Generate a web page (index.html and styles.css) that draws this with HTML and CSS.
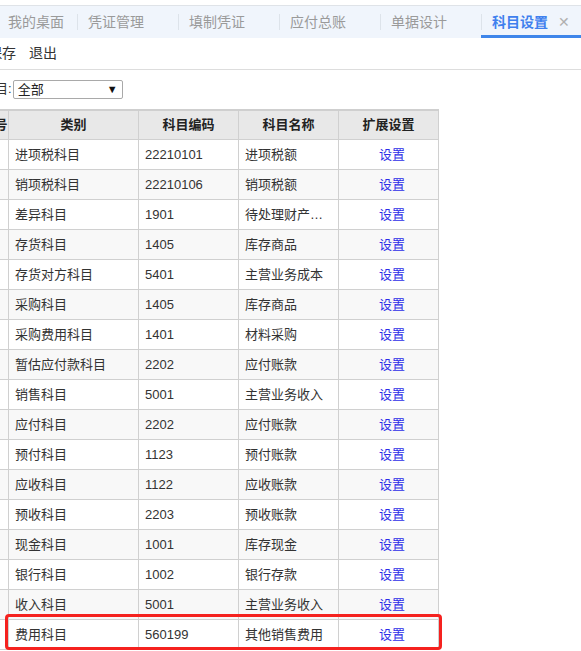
FILE: index.html
```html
<!DOCTYPE html>
<html lang="zh-CN">
    <head>
        <meta charset="UTF-8">
        <title>科目设置</title>
        <link rel="stylesheet" href="styles.css">
    </head>
    <body>
        <div class="tabbar">
            <div class="tab">我的桌面</div>
            <div class="tab">凭证管理</div>
            <div class="tab">填制凭证</div>
            <div class="tab">应付总账</div>
            <div class="tab">单据设计</div>
            <div class="tab active">科目设置<span class="close">✕</span></div>
        </div>
        <div class="toolbar">
            <span class="btn">保存</span>
            <span class="btn">退出</span>
        </div>
        <div class="filter">
            <span class="label">科目:</span>
            <div class="select">
                <span>全部</span>
                <span class="arrow">▼</span>
            </div>
        </div>
        <div class="gridWrap">
            <table class="grid">
                <colgroup>
                    <col class="c0">
                    <col class="c1">
                    <col class="c2">
                    <col class="c3">
                    <col class="c4">
                </colgroup>
                <thead>
                    <tr>
                        <th>序号</th>
                        <th>类别</th>
                        <th>科目编码</th>
                        <th>科目名称</th>
                        <th>扩展设置</th>
                    </tr>
                </thead>
                <tbody>
                    <tr><td></td><td>进项税科目</td><td>22210101</td><td>进项税额</td><td class="op"><a>设置</a></td></tr>
                    <tr><td></td><td>销项税科目</td><td>22210106</td><td>销项税额</td><td class="op"><a>设置</a></td></tr>
                    <tr><td></td><td>差异科目</td><td>1901</td><td>待处理财产损溢</td><td class="op"><a>设置</a></td></tr>
                    <tr><td></td><td>存货科目</td><td>1405</td><td>库存商品</td><td class="op"><a>设置</a></td></tr>
                    <tr><td></td><td>存货对方科目</td><td>5401</td><td>主营业务成本</td><td class="op"><a>设置</a></td></tr>
                    <tr><td></td><td>采购科目</td><td>1405</td><td>库存商品</td><td class="op"><a>设置</a></td></tr>
                    <tr><td></td><td>采购费用科目</td><td>1401</td><td>材料采购</td><td class="op"><a>设置</a></td></tr>
                    <tr><td></td><td>暂估应付款科目</td><td>2202</td><td>应付账款</td><td class="op"><a>设置</a></td></tr>
                    <tr><td></td><td>销售科目</td><td>5001</td><td>主营业务收入</td><td class="op"><a>设置</a></td></tr>
                    <tr><td></td><td>应付科目</td><td>2202</td><td>应付账款</td><td class="op"><a>设置</a></td></tr>
                    <tr><td></td><td>预付科目</td><td>1123</td><td>预付账款</td><td class="op"><a>设置</a></td></tr>
                    <tr><td></td><td>应收科目</td><td>1122</td><td>应收账款</td><td class="op"><a>设置</a></td></tr>
                    <tr><td></td><td>预收科目</td><td>2203</td><td>预收账款</td><td class="op"><a>设置</a></td></tr>
                    <tr><td></td><td>现金科目</td><td>1001</td><td>库存现金</td><td class="op"><a>设置</a></td></tr>
                    <tr><td></td><td>银行科目</td><td>1002</td><td>银行存款</td><td class="op"><a>设置</a></td></tr>
                    <tr><td></td><td>收入科目</td><td>5001</td><td>主营业务收入</td><td class="op"><a>设置</a></td></tr>
                    <tr><td></td><td>费用科目</td><td>560199</td><td>其他销售费用</td><td class="op"><a>设置</a></td></tr>
                </tbody>
            </table>
            <div class="mark"></div>
        </div>
    </body>
</html>
```
FILE: styles.css
```css
html, body{
    margin: 0;
    padding: 0;
    background: #fff;
    overflow: hidden;
}
body{
    font-family: "Liberation Sans", "Noto Sans CJK SC", sans-serif;
    font-size: 13px;
    color: #333;
}
.tabbar{
    margin-top: 5px;
    border-top: 1px solid #dfe3e8;
    height: 32px;
    background: #f0f5fc;
    display: flex;
}
.tab{
    box-sizing: border-box;
    width: 101px;
    flex: none;
    padding-left: 11px;
    line-height: 32px;
    font-size: 14px;
    color: #9a9a9a;
    white-space: nowrap;
    background: linear-gradient(#dde3ea, #dde3ea) no-repeat left center / 1px 16px;
}
.tab:first-child{
    width: 77px;
    padding-left: 8px;
    background: none;
}
.tab.active{
    color: #3f80ee;
    font-weight: bold;
    box-shadow: inset 0 -4px 0 -1px #3f86ea;
}
.tab .close{
    font-weight: normal;
    color: #b0b0b0;
    font-size: 14px;
    margin-left: 10px;
}
.toolbar{
    height: 31px;
    line-height: 31px;
    border-bottom: 1px solid #ddd;
    margin-left: -12px;
    font-size: 14px;
    color: #333;
}
.toolbar .btn{
    margin-right: 9px;
}
.filter{
    height: 39px;
    box-sizing: border-box;
    padding-top: 10px;
    margin-left: -18px;
    display: flex;
    align-items: flex-start;
}
.filter .label{
    line-height: 18px;
    margin-right: 1px;
}
.select{
    box-sizing: border-box;
    width: 110px;
    height: 19px;
    border: 1px solid #a9a9a9;
    border-radius: 2px;
    display: flex;
    justify-content: space-between;
    align-items: center;
    padding: 0 4px 0 4px;
    line-height: 17px;
    color: #222;
}
.select .arrow{
    font-size: 11px;
    color: #111;
}
.gridWrap{
    position: relative;
    margin-left: -20px;
}
table.grid{
    border-collapse: collapse;
    table-layout: fixed;
    width: 458px;
    border-top: 2px solid #cfcfcf;
}
.grid col.c0{ width: 28px; }
.grid col.c1{ width: 130px; }
.grid col.c2{ width: 100px; }
.grid col.c3{ width: 100px; }
.grid col.c4{ width: 100px; }
.grid th, .grid td{
    border: 1px solid #d0d0d0;
    height: 30px;
    padding: 0 6px;
    box-sizing: border-box;
    white-space: nowrap;
    overflow: hidden;
    text-overflow: ellipsis;
    line-height: 27px;
}
.grid th{
    background: #e8e8e8;
    color: #222;
    font-weight: bold;
    text-align: center;
    height: 29px;
    padding: 0;
}
.grid td:first-child{
    padding: 0;
}
.grid tbody tr:nth-child(even) td{
    background: #f8f8f8;
}
.grid td.op{
    text-align: center;
    padding: 0 0 0 7px;
}
.grid td.op a{
    color: #2e2ee8;
    cursor: pointer;
}
.mark{
    position: absolute;
    left: 25px;
    top: 505px;
    width: 437px;
    height: 36px;
    box-sizing: border-box;
    border: 3px solid #f5221f;
    border-radius: 4px;
}
```
